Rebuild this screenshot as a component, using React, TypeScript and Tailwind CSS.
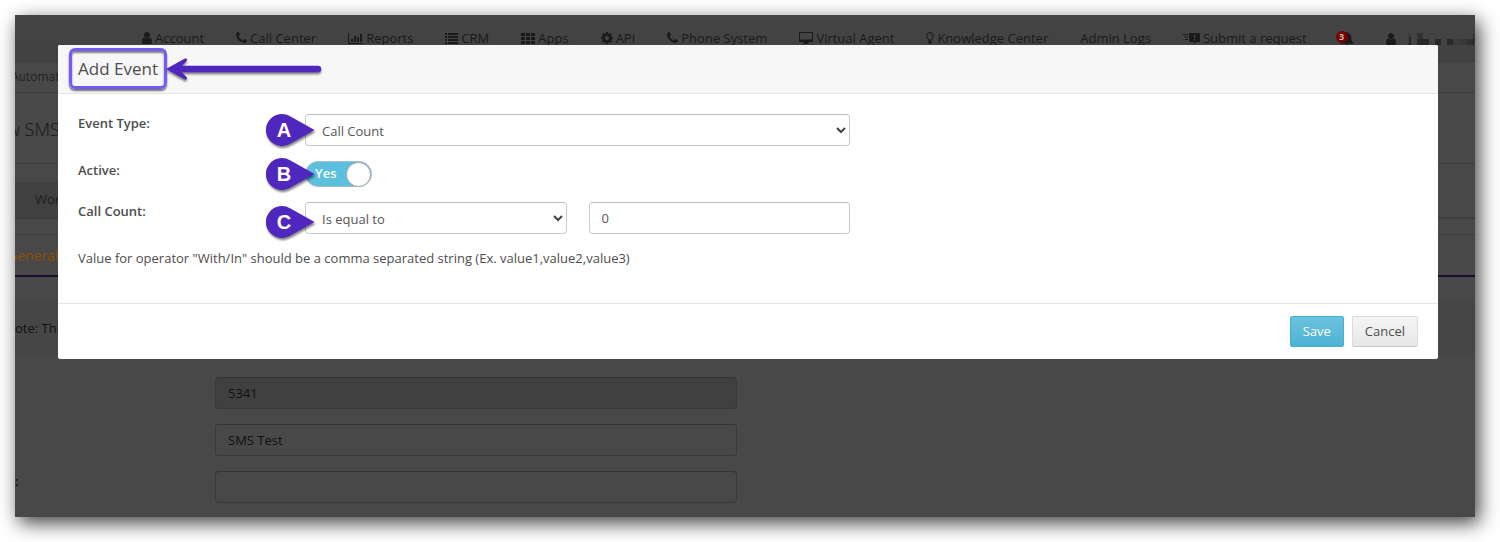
import { useState } from 'react';
import type { ReactNode } from 'react';

// Icons
const UserIcon = () => (
    <svg className="h-[14px] w-[10px]" viewBox="256 0 1280 1792" fill="currentColor">
        <path d="M1536 1399q0 109-62.5 187t-150.5 78h-854q-88 0-150.5-78t-62.5-187q0-85 8.5-160.5t31.5-152 58.5-131 94-89 134.5-34.5q131 128 313 128t313-128q76 0 134.5 34.5t94 89 58.5 131 31.5 152 8.5 160.5zm-256-887q0 159-112.5 271.5t-271.5 112.5-271.5-112.5-112.5-271.5 112.5-271.5 271.5-112.5 271.5 112.5 112.5 271.5z" />
    </svg>
);

const PhoneIcon = () => (
    <svg className="h-[14px] w-[11px]" viewBox="192 0 1408 1792" fill="currentColor">
        <path d="M1600 1240q0 27-10 70.5t-21 68.5q-21 50-122 106-94 51-186 51-27 0-52.5-3.5t-57.5-12.5-47.5-14.5-55.5-20.5-49-18q-98-35-175-83-128-79-264.5-215.5t-215.5-264.5q-48-77-83-175-3-9-18-49t-20.5-55.5-14.5-47.5-12.5-57.5-3.5-52.5q0-92 51-186 56-101 106-122 25-11 68.5-21t70.5-10q14 0 21 3 18 6 53 76 11 19 30 54t35 63.5 31 53.5q3 4 17.5 25t21.5 35.5 7 28.5q0 20-28.5 50t-62 55-62 53-28.5 46q0 9 5 22.5t8.5 20.5 14 24 11.5 19q76 137 174 235t235 174q2 1 19 11.5t24 14 20.5 8.5 22.5 5q18 0 46-28.5t53-62 55-62 50-28.5q14 0 28.5 7t35.5 21.5 25 17.5q25 15 53.5 31t63.5 35 54 30q70 35 76 53 3 7 3 21z" />
    </svg>
);

const ChartIcon = () => (
    <svg className="h-[11px] w-[15px]" viewBox="0 0 15 11" fill="currentColor">
        <path d="M0 0h1v10h14v1H0zM3 6h2v3H3zM6 3h2v6H6zM9 4h2v5H9zM12 1h2v8h-2z" />
    </svg>
);

const ListIcon = () => (
    <svg className="h-[11px] w-[13px]" viewBox="0 0 13 11" fill="currentColor">
        <path d="M0 0h2v2H0zM3 0h10v2H3zM0 3h2v2H0zM3 3h10v2H3zM0 6h2v2H0zM3 6h10v2H3zM0 9h2v2H0zM3 9h10v2H3z" />
    </svg>
);

const GridIcon = () => (
    <svg className="h-[11px] w-[14px]" viewBox="0 0 14 11" fill="currentColor">
        <path d="M0 0h4v3H0zM5 0h4v3H5zM10 0h4v3h-4zM0 4h4v3H0zM5 4h4v3H5zM10 4h4v3h-4zM0 8h4v3H0zM5 8h4v3H5zM10 8h4v3h-4z" />
    </svg>
);

const CogIcon = () => (
    <svg className="h-[14px] w-[12px]" viewBox="128 0 1536 1792" fill="currentColor">
        <path d="M1152 896q0-106-75-181t-181-75-181 75-75 181 75 181 181 75 181-75 75-181zm512-109v222q0 12-8 23t-20 13l-185 28q-19 54-39 91 35 50 107 138 10 12 10 25t-9 23q-27 37-99 108t-94 71q-12 0-26-9l-138-108q-44 23-91 38-16 136-29 186-7 28-36 28h-222q-14 0-24.5-8.5t-11.5-21.5l-28-184q-49-16-90-37l-141 107q-10 9-25 9-14 0-25-11-126-114-165-168-7-10-7-23 0-12 8-23 15-21 51-66.5t54-70.5q-27-50-41-99l-183-27q-13-2-21-12.5t-8-23.5v-222q0-12 8-23t19-13l186-28q14-46 39-92-40-57-107-138-10-12-10-24 0-10 9-23 26-36 98.5-107.5t94.500-71.500q13 0 26 10l138 107q44-23 91-38 16-136 29-186 7-28 36-28h222q14 0 24.500 8.500t11.500 21.500l28 184q49 16 90 37l142-107q9-9 24-9 13 0 25 10 129 119 165 170 7 8 7 22 0 12-8 23-15 21-51 66.500t-54 70.500q26 50 41 98l183 28q13 2 21 12.500t8 23.500z" />
    </svg>
);

const DesktopIcon = () => (
    <svg className="h-[12px] w-[14px]" viewBox="0 0 14 12" fill="currentColor" fillRule="evenodd">
        <path d="M1 0h12a1 1 0 0 1 1 1v8a1 1 0 0 1-1 1H9v1l1 .5v.5H4v-.5l1-.5v-1H1a1 1 0 0 1-1-1V1a1 1 0 0 1 1-1zm0 1v6.500h12V1z" />
    </svg>
);

const BulbIcon = () => (
    <svg className="h-[12px] w-[8px]" viewBox="0 0 8 12" fill="none" stroke="currentColor">
        <path d="M2.500 8C2.500 6.500.6 5.800.6 3.700A3.400 3.200 0 0 1 7.400 3.700C7.400 5.800 5.500 6.500 5.500 8z" />
        <path d="M4 2.200q1.500 0 1.500 1.400" strokeWidth="0.8" />
        <path d="M2.300 9h3.400M2.300 10.300h3.400M3 11.400h2" strokeWidth="1.2" />
    </svg>
);

const RequestIcon = () => (
    <svg className="h-[12px] w-[17px]" viewBox="0 0 17 12" fill="currentColor" fillRule="evenodd">
        <path d="M0 2h5v1H0zM1 4.500h4v1H1zM2 7h3v1H2z" />
        <path d="M7 1h9a1 1 0 0 1 1 1v7a1 1 0 0 1-1 1h-3l-2 2v-2H7a1 1 0 0 1-1-1V2a1 1 0 0 1 1-1zm3.800 1.500v3.500h1.400V2.500zm0 4.500v1.400h1.400V7z" />
    </svg>
);

const BellIcon = () => (
    <svg className="h-[14px] w-[14px]" viewBox="0 0 14 14" fill="currentColor">
        <path d="M7 0a1 1 0 0 1 1 1.200c2.200.5 3.300 2.300 3.300 4.300 0 3 .9 4.300 2.200 5.500v.8H.5V11c1.300-1.200 2.200-2.500 2.200-5.500 0-2 1.100-3.800 3.300-4.300A1 1 0 0 1 7 0zM5.500 12.300h3a1.500 1.500 0 0 1-3 0z" />
    </svg>
);

const ChevronIcon = () => (
    <svg className="pointer-events-none absolute top-[13px] right-1 h-[7px] w-[10px] text-[#444444]" viewBox="0 0 10 7" fill="none" stroke="currentColor" strokeWidth="2">
        <path d="M1 1l4 4 4-4" />
    </svg>
);

// User name with its letters masked out
const MaskedName = () => (
    <svg className="h-[12px] w-[67px]" viewBox="0 0 67 12">
        <path d="M0 0h3v12H0z" fill="#3c3c3c" />
        <path d="M1 4h2v8H0v-1h1z" fill="#262626" />
        <path d="M9 0h6v6H9z" fill="#333333" />
        <path d="M9 6h12v6H9zM27 6h6v6h-6z" fill="#282828" />
        <path d="M39 6h6v6h-6z" fill="#2a2a2a" />
        <path d="M45 6h7v6h-7z" fill="#3c3c3c" />
        <path d="M52 6h7v6h-7z" fill="#373737" />
        <path d="M59 6h6v6h-6z" fill="#303030" />
        <path d="M65 1h1v2h-1zM65 4h1v8h-1z" fill="#1f1f1f" />
    </svg>
);

const ArrowMark = () => (
    <svg className="absolute top-0 left-[88px] h-[32px] w-[162px] text-[#4f27bf] drop-shadow-[0_2px_1px_rgba(0,0,0,0.5)]" viewBox="0 0 162 32" fill="currentColor">
        <path d="M0 14L18.500 3.700a1.500 1.500 0 0 1 2.200 2L16 10.800H152a3.200 3.200 0 0 1 0 6.400H16l4.700 5.100a1.500 1.500 0 0 1-2.200 2z" />
    </svg>
);

const navItems = [
    { label: 'Account', icon: <UserIcon /> },
    { label: 'Call Center', icon: <PhoneIcon /> },
    { label: 'Reports', icon: <ChartIcon /> },
    { label: 'CRM', icon: <ListIcon /> },
    { label: 'Apps', icon: <GridIcon /> },
    { label: 'API', icon: <CogIcon /> },
    { label: 'Phone System', icon: <PhoneIcon /> },
    { label: 'Virtual Agent', icon: <DesktopIcon /> },
    { label: 'Knowledge Center', icon: <BulbIcon /> },
    { label: 'Admin Logs', icon: null },
    { label: 'Submit a request', icon: <RequestIcon /> },
];

const fieldClass = 'h-8 w-full rounded border border-[#cccccc] border-t-[#bbbbbb] bg-white text-[13px] text-[#555555]';
const dimFieldClass = 'h-8 rounded border border-[#3a3a3a] border-t-[#333333] px-3';

const TopNav = () => (
    <header className="flex h-[47px] items-center gap-8 border-b border-[#3b3b3b] bg-linear-to-b from-[#454545] to-[#414141] pt-0.5 pl-[127px] whitespace-nowrap text-[#1a1a1a]">
        {navItems.map(item => (
            <a key={item.label} href="#" className="flex items-center gap-[3px] [&>svg]:mb-0.5">
                {item.icon}
                {item.label}
            </a>
        ))}
        <div className="-ml-0.5 flex items-center">
            <button type="button" aria-label="Notifications" className="relative flex h-5 w-[17px] items-center justify-end">
                <BellIcon />
                <span className="absolute top-0.5 -left-px flex h-3 w-3 items-center justify-center rounded-full bg-[#780000] text-[9px] leading-3 font-bold text-[#bbbbbb]">3</span>
            </button>
            <a href="#" aria-label="User menu" className="ml-8 flex items-center gap-3">
                <UserIcon />
                <MaskedName />
            </a>
        </div>
    </header>
);

const PageBehind = () => (
    <div className="text-[13px] text-[#111111]">
        <TopNav />
        <nav className="flex h-[31px] items-center border-b border-[#3d3d3d]">
            <a href="#" className="-ml-1 text-xs text-[#222222]">Automation</a>
        </nav>
        <div className="h-[71px] border-b border-[#3d3d3d] pt-[22px]">
            <h1 className="-ml-2 text-lg leading-7 font-light text-[#141414]">w SMS</h1>
        </div>
        <div className="mt-[18px] flex border-b-2 border-[#3e3e3e]">
            <a href="#" className="bg-[#404040] px-5 py-2 leading-[19px] text-[#1f1f1f]">Workflow</a>
        </div>
        <div className="mt-[15px] flex h-[43px] items-center border-t border-b-2 border-t-[#3d3d3d] border-b-[#1c0c30]">
            <a href="#" className="-ml-2 text-[14px] text-[#8a5006]">General</a>
        </div>
        <p className="mt-[23px] flex h-[57px] items-center bg-[#464646]">
            <span className="-ml-2">note: This</span>
        </p>
        <form className="mt-5 grid grid-cols-[200px_minmax(0,522px)] gap-y-[15px]">
            <span />
            <input aria-label="Id" readOnly defaultValue="5341" className={`${dimFieldClass} bg-[#404040]`} />
            <span />
            <input aria-label="Name" defaultValue="SMS Test" className={dimFieldClass} />
            <label htmlFor="description" className="leading-5 font-semibold">:</label>
            <input id="description" className={dimFieldClass} />
        </form>
    </div>
);

type SelectProps = { id: string; options: string[] };

const Select = ({ id, options }: SelectProps) => (
    <div className="relative flex-1">
        <select id={id} className={`${fieldClass} appearance-none px-4 pt-[3px]`}>
            {options.map(option => <option key={option}>{option}</option>)}
        </select>
        <ChevronIcon />
    </div>
);

const Marker = ({ letter, className }: { letter: string; className: string }) => (
    <div className={`absolute -left-[39px] h-8 w-[49px] ${className}`}>
        <svg className="absolute inset-0 h-8 w-[49px] overflow-visible text-[#4f27bf] drop-shadow-[1px_2px_1px_rgba(0,0,0,0.5)]" viewBox="0 0 49 32" fill="currentColor">
            <path d="M24 2.200L48.500 16 24 29.800A16 16 0 1 1 24 2.200z" />
        </svg>
        <span className="relative flex h-8 w-9 items-center justify-center font-['Liberation_Sans',sans-serif] text-xl font-bold text-white">{letter}</span>
    </div>
);

type RowProps = { label: string; htmlFor: string; marker: string; markerClass: string; children: ReactNode };

const FormRow = ({ label, htmlFor, marker, markerClass, children }: RowProps) => (
    <div className="grid grid-cols-[227px_minmax(0,545px)]">
        <label htmlFor={htmlFor} className="leading-[19px] font-semibold">{label}</label>
        <div className="relative flex gap-[22px]">
            {children}
            <Marker letter={marker} className={markerClass} />
        </div>
    </div>
);

const Toggle = ({ id }: { id: string }) => {
    const [isOn, setIsOn] = useState(true);

    return (
        <label className="relative flex h-[26px] w-[67px] items-center justify-between rounded-full border border-[#a9bcc2] bg-[#5bc0de] pl-[9px] font-semibold text-white">
            <input id={id} type="checkbox" checked={isOn} onChange={() => setIsOn(prev => !prev)} className="sr-only" />
            {isOn ? 'Yes' : 'No'}
            <span className="h-[25px] w-[25px] rounded-full border border-[#aaaaaa] bg-white" />
        </label>
    );
};

const AddEventModal = () => (
    <div role="dialog" aria-labelledby="modal-title" className="w-full overflow-hidden rounded-xs bg-white text-[13px] text-[#4d4d4d]">
        <div className="flex h-[49px] items-center border-b border-[#e5e5e5] bg-[#f7f7f7] px-5">
            <div className="relative">
                <h2 id="modal-title" className="text-[17px] leading-7">Add Event</h2>
                <div className="absolute -inset-x-[9px] -top-[7px] -bottom-[6px] rounded-md border-3 border-[#7758fa] shadow-[0_2px_2px_rgba(0,0,0,0.55),inset_0_2px_2px_rgba(0,0,0,0.5)]" />
                <ArrowMark />
            </div>
        </div>

        <form>
            <div className="flex flex-col gap-[15px] px-5 pt-5 pb-[35px]">
                <FormRow label="Event Type:" htmlFor="event-type" marker="A" markerClass="top-0">
                    <Select id="event-type" options={['Call Count']} />
                </FormRow>
                <FormRow label="Active:" htmlFor="active" marker="B" markerClass="-top-[3px]">
                    <Toggle id="active" />
                </FormRow>
                <FormRow label="Call Count:" htmlFor="operator" marker="C" markerClass="top-1">
                    <Select id="operator" options={['Is equal to']} />
                    <div className="flex-1">
                        <input aria-label="Call count value" defaultValue="0" className={`${fieldClass} px-3`} />
                    </div>
                </FormRow>
                <p className="leading-[19px]">Value for operator "With/In" should be a comma separated string (Ex. value1,value2,value3)</p>
            </div>

            <div className="flex justify-end gap-2 border-t border-[#e5e5e5] px-5 py-3">
                <button type="submit" className="h-[31px] rounded-xs border border-[#46b0d2] bg-linear-to-b from-[#6bc2dd] to-[#4db3d4] px-3 font-medium text-white">Save</button>
                <button type="button" className="h-[31px] rounded-xs border border-[#dcdcdc] border-b-[#c8c8c8] bg-linear-to-b from-[#f4f4f4] to-[#e8e8e8] px-3">Cancel</button>
            </div>
        </form>
    </div>
);

export default function App() {
    return (
        <div className="bg-white p-[15px] pr-[25px] pb-[25px] font-['Open_Sans','Liberation_Sans',sans-serif]">
            <div className="relative shadow-[4px_6px_18px_rgba(0,0,0,0.75)]">
                <div className="overflow-hidden bg-[#484848] pb-[14px]">
                    <PageBehind />
                </div>
                <div className="absolute inset-0 flex items-start pt-[30px] pr-[37px] pl-[43px]">
                    <AddEventModal />
                </div>
            </div>
        </div>
    );
}
